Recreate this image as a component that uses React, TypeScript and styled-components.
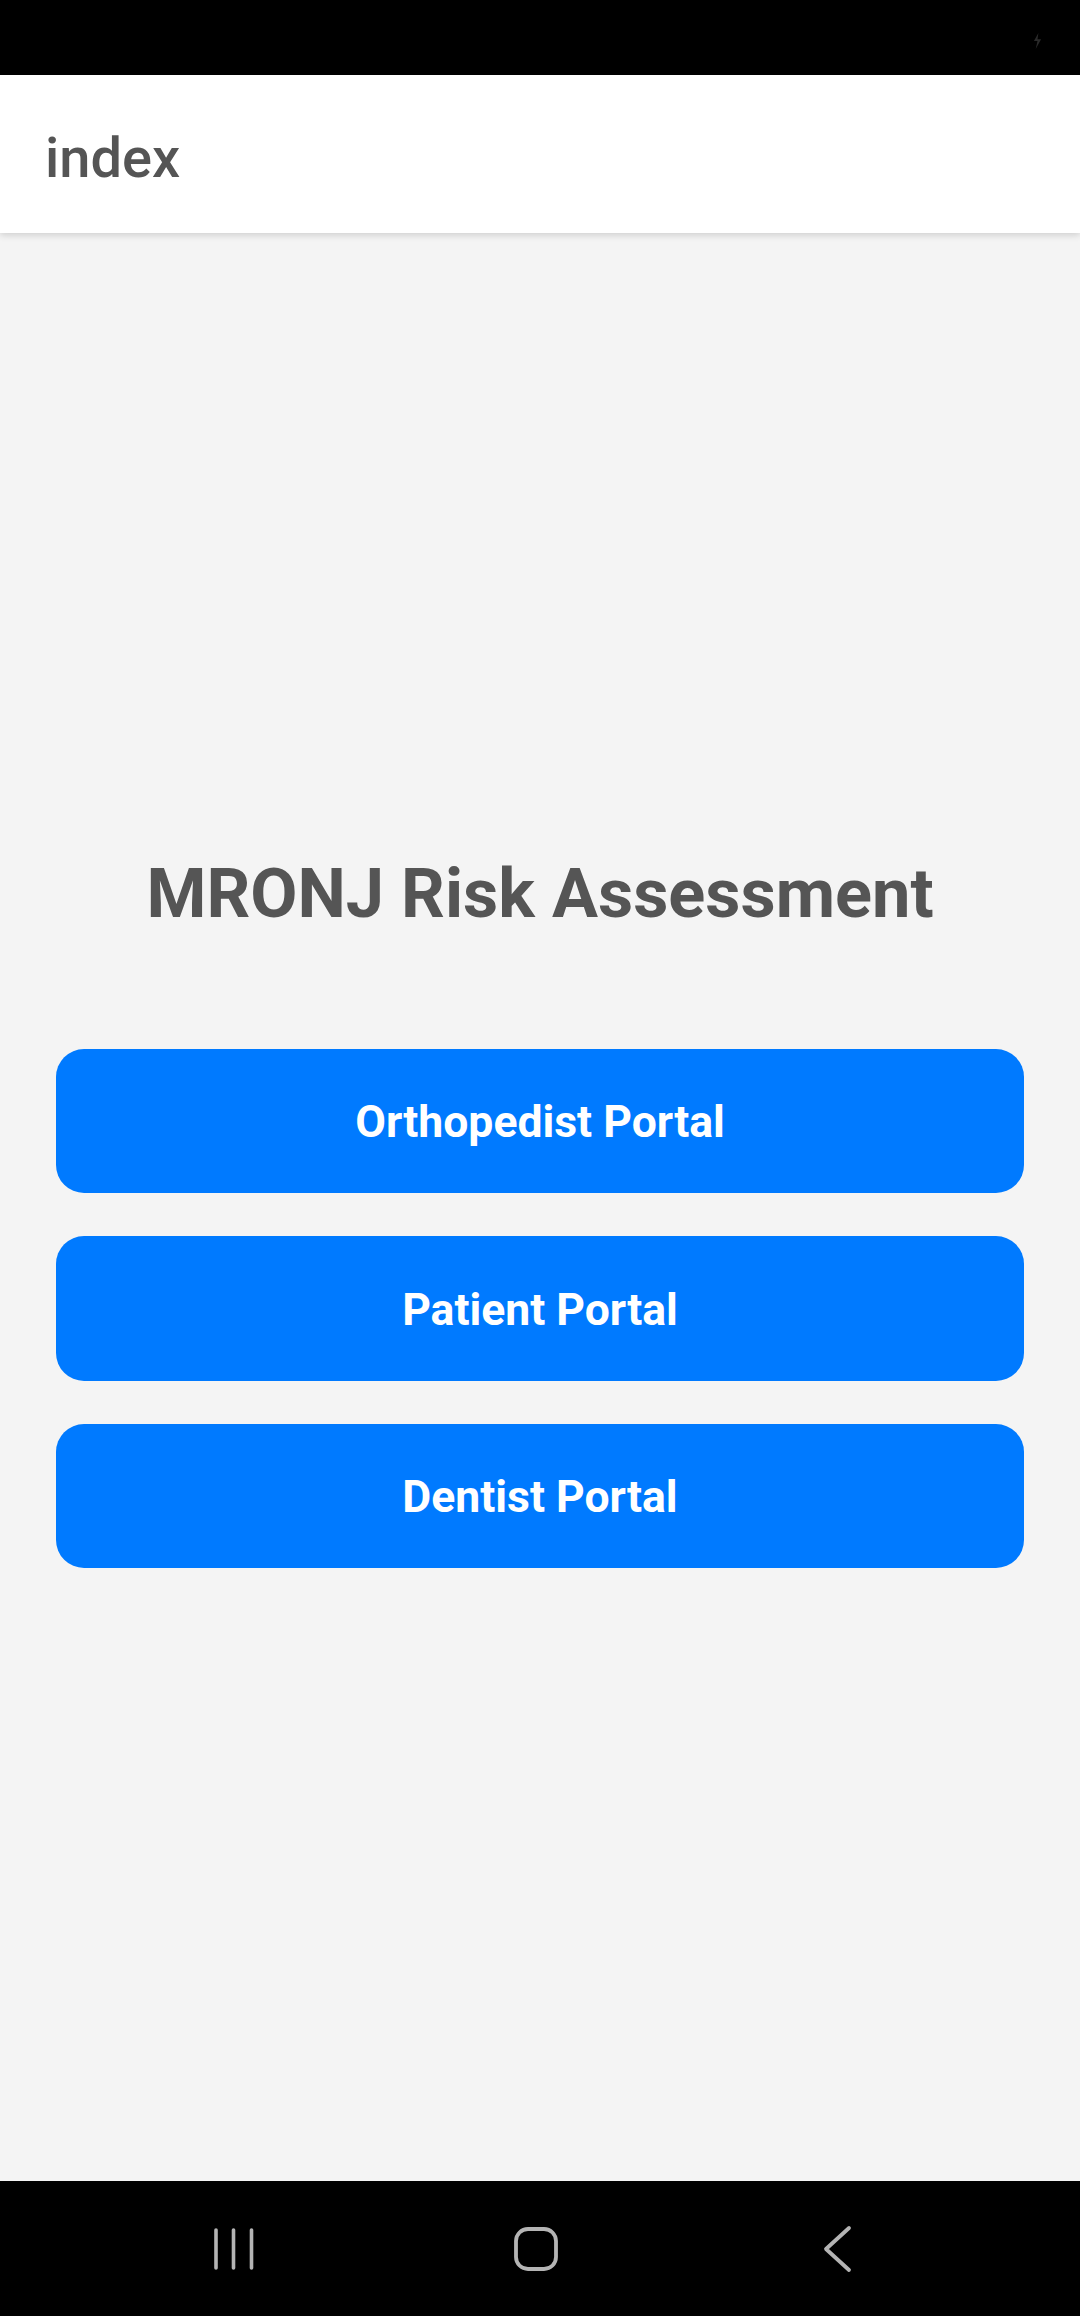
import React from 'react';
import styled, { createGlobalStyle } from 'styled-components';

const portals = ['Orthopedist Portal', 'Patient Portal', 'Dentist Portal'];

const App = () => {
  return (
    <Screen>
      <GlobalStyle />
      <StatusBar>
        <ChargeIcon viewBox='0 0 10 18'>
          <path d='M6 0 L1 9 H5 L3 18 L9 7 H5 Z' fill='#2a2a2a' />
        </ChargeIcon>
      </StatusBar>
      <Header>
        <HeaderTitle>index</HeaderTitle>
      </Header>
      <Main>
        <Title>MRONJ Risk Assessment</Title>
        <ButtonList>
          {portals.map((label) => (
            <PortalButton key={label} type='button'>
              {label}
            </PortalButton>
          ))}
        </ButtonList>
      </Main>
      <NavBar>
        <NavSlot>
          <svg width='44' height='46' viewBox='0 0 44 46'>
            <g stroke='#b4b4b4' strokeWidth='3.6' strokeLinecap='round'>
              <line x1='4' y1='4' x2='4' y2='42' />
              <line x1='21.5' y1='4' x2='21.5' y2='42' />
              <line x1='39.5' y1='4' x2='39.5' y2='42' />
            </g>
          </svg>
        </NavSlot>
        <NavSlot>
          <svg width='46' height='46' viewBox='0 0 46 46'>
            <rect
              x='3'
              y='3'
              width='40'
              height='40'
              rx='12'
              fill='none'
              stroke='#b4b4b4'
              strokeWidth='3.8'
            />
          </svg>
        </NavSlot>
        <NavSlot>
          <svg width='30' height='48' viewBox='0 0 30 48'>
            <polyline
              points='26,3 3,24 26,45'
              fill='none'
              stroke='#b4b4b4'
              strokeWidth='3.8'
              strokeLinecap='round'
              strokeLinejoin='round'
            />
          </svg>
        </NavSlot>
      </NavBar>
    </Screen>
  );
};

const GlobalStyle = createGlobalStyle`
  * {
    box-sizing: border-box;
  }
  body {
    margin: 0;
    background: #000;
    font-family: Roboto, 'Noto Sans', Arial, sans-serif;
  }
`;

const Screen = styled.div`
  display: flex;
  flex-direction: column;
  width: 1080px;
  height: 2316px;
  background: #f4f4f4;
  overflow: hidden;
`;

const StatusBar = styled.div`
  display: flex;
  align-items: center;
  justify-content: flex-end;
  height: 75px;
  padding: 6px 38px 0 0;
  background: #000;
`;

const ChargeIcon = styled.svg`
  width: 9px;
  height: 16px;
`;

const Header = styled.header`
  display: flex;
  align-items: center;
  height: 158px;
  padding: 7px 0 0 45px;
  background: #fff;
  box-shadow: 0 2px 7px rgba(0, 0, 0, 0.16);
  position: relative;
  z-index: 1;
`;

const HeaderTitle = styled.h1`
  margin: 0;
  font-family: Roboto, sans-serif;
  font-size: 56px;
  font-weight: 500;
  color: #555;
`;

const Main = styled.main`
  flex: 1;
  display: flex;
  flex-direction: column;
  align-items: center;
  justify-content: center;
  padding: 8px 56px 0;
`;

const Title = styled.h2`
  margin: 0 0 116px;
  font-family: Roboto, sans-serif;
  font-size: 68.5px;
  line-height: 79px;
  font-weight: 700;
  color: #555;
  text-align: center;
`;

const ButtonList = styled.div`
  display: flex;
  flex-direction: column;
  gap: 43px;
  width: 100%;
`;

const PortalButton = styled.button`
  display: flex;
  align-items: center;
  justify-content: center;
  width: 100%;
  height: 144.5px;
  padding: 2px 0 0;
  border: none;
  border-radius: 28px;
  background: #007aff;
  color: #fff;
  font-family: Roboto, sans-serif;
  font-size: 44.5px;
  font-weight: 700;
  cursor: pointer;
`;

const NavBar = styled.nav`
  display: flex;
  align-items: center;
  justify-content: center;
  gap: 202px;
  height: 135px;
  padding: 0 9px 0 0;
  background: #000;
`;

const NavSlot = styled.div`
  display: flex;
  align-items: center;
  justify-content: center;
  width: 100px;
  height: 60px;
`;

export default App;
